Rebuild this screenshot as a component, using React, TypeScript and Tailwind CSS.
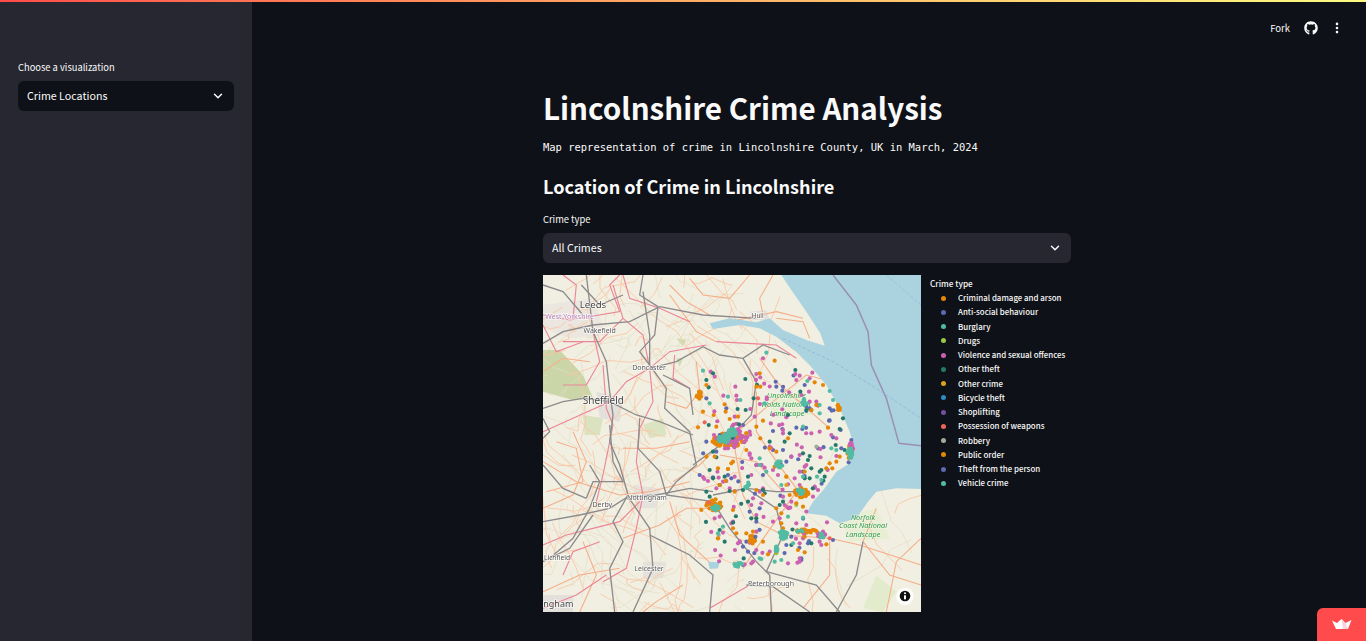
import { ChevronDown, EllipsisVertical } from "lucide-react";
import { FaGithub } from "react-icons/fa";

const SANS = "font-['Noto_Sans_CJK_SC','Noto_Sans',sans-serif]";

const LEGEND: [string, string][] = [
  ["Criminal damage and arson", "#e58606"],
  ["Anti-social behaviour", "#5d69b1"],
  ["Burglary", "#52bca3"],
  ["Drugs", "#99c945"],
  ["Violence and sexual offences", "#cc61b0"],
  ["Other theft", "#24796c"],
  ["Other crime", "#daa51b"],
  ["Bicycle theft", "#2f8ac4"],
  ["Shoplifting", "#764e9f"],
  ["Possession of weapons", "#ed645a"],
  ["Robbery", "#a5aa99"],
  ["Public order", "#e58606"],
  ["Theft from the person", "#5d69b1"],
  ["Vehicle crime", "#52bca3"],
];

const GREY = [
  "0,205 60,170 150,150 260,140 350,95 480,120 640,130",
  "130,0 150,170 190,260 200,350 210,420 200,500 230,570 255,660 210,740 240,800 200,880 215,1011",
  "300,50 320,180 320,270 370,340 365,400 440,470 460,570 400,620 370,660 510,680 560,760 640,860 680,900 685,1011",
  "320,280 400,260 480,215 530,240 600,250 660,210 740,240",
  "0,740 110,720 200,700 255,665 340,660 440,640 510,650",
  "270,1011 330,880 320,760 255,665",
  "0,860 80,820 150,720",
  "600,250 640,320 625,420 560,490 450,570",
  "510,660 610,640 700,650 760,650",
  "610,640 700,700 720,780 670,890 820,930 890,1011",
  "0,400 60,380 120,370 200,380 280,420 350,440 450,480",
  "200,450 210,560 240,620 150,620 130,670",
  "360,300 400,320 440,340 450,420",
  "500,1011 510,900 440,840 360,800 320,780",
  "960,800 940,900 880,1011",
  "0,570 60,640 130,670",
  "345,95 335,180 290,230 320,270",
  "0,30 60,50 120,120",
  "290,430 285,520 350,590 370,660",
  "140,570 170,620 140,700 90,790 20,850",
  "0,430 20,470 0,490",
  "800,1011 690,935 610,930",
  "300,0 290,60 345,95",
  "115,30 170,90 240,60",
];
const PINK = [
  "0,120 80,135 230,110 200,30 230,0",
  "150,170 170,260 130,330 60,330",
  "320,280 300,180 240,130",
  "0,470 90,430 200,380 250,320 320,280 380,230 490,210",
  "180,270 190,400 210,450 180,600 160,680",
  "320,280 330,380 290,460 280,560 300,660 280,760 250,880 180,920",
  "0,810 70,780 150,760 230,740 290,680",
  "520,200 700,210 760,250",
  "350,100 440,140",
  "500,1000 620,930",
  "210,30 240,130 170,200 60,200",
  "90,130 100,30 60,0",
  "0,1000 100,960 190,900",
  "395,240 390,310 440,340",
  "0,150 40,230 120,200",
  "60,900 90,830 170,800",
  "240,0 260,70 350,100",
];
const ORANGE = [
  "0,560 100,620 230,660 320,650 440,620",
  "570,490 600,660 640,740 720,780",
  "520,520 470,570 390,620",
  "560,490 690,380 790,300 870,320",
  "640,350 640,470 700,560 760,640",
  "760,650 640,820 600,880",
  "720,780 860,790 950,810 1134,870",
  "560,140 700,110 780,130",
  "690,0 650,70 660,120",
  "380,30 430,80 500,120",
  "0,950 110,900 230,880",
  "10,650 120,620 100,520 40,500",
  "1000,700 960,800 1040,900 1134,930",
  "860,800 860,900 780,1000",
  "520,880 410,780 380,680",
  "370,380 430,400 470,350 460,260",
  "0,290 60,250 140,260",
  "420,930 340,980 300,1011",
  "120,800 160,900 110,1011",
  "0,700 90,660 130,560 90,470",
  "240,520 340,520 440,500",
  "240,790 350,750 430,700 500,700",
  "1030,1011 1060,860 1134,790",
  "530,540 640,560 720,650",
  "650,250 700,320 780,390 860,460",
  "440,10 480,60 560,70 620,0",
  "380,60 460,170 520,200",
  "700,130 780,140 800,190",
];

function rng(seed: number) {
  let s = seed;
  return () => {
    s = (s * 1664525 + 1013904223) % 4294967296;
    return s / 4294967296;
  };
}
const MINOR = (() => {
  const r = rng(77);
  const out: string[] = [];
  for (let i = 0; i < 210; i++) {
    let x = r() * 1134;
    let y = r() * 1011;
    if (x > 480 && r() < 0.55) x = r() * 480;
    if (x > 720 && y < 640) x = r() * 640;
    const pts = [`${x.toFixed(0)},${y.toFixed(0)}`];
    const dx = (r() - 0.5) * 110;
    const dy = (r() - 0.5) * 110;
    for (let j = 0; j < 4; j++) {
      x += dx + (r() - 0.5) * 45;
      y += dy + (r() - 0.5) * 45;
      pts.push(`${x.toFixed(0)},${y.toFixed(0)}`);
    }
    out.push(pts.join(" "));
  }
  return out;
})();

const parse = (s: string) =>
  s
    .trim()
    .split(/\s+/)
    .map((p) => p.split(",").map(Number) as [number, number]);

function cluster(seed: number, x: number, y: number, rx: number, ry: number, n: number) {
  const r = rng(seed);
  const out: [number, number][] = [];
  for (let i = 0; i < n; i++) {
    const a = r() * Math.PI * 2;
    const d = Math.sqrt(r());
    out.push([x + Math.cos(a) * rx * d, y + Math.sin(a) * ry * d]);
  }
  return out;
}

function scatter(seed: number, n: number) {
  const r = rng(seed);
  const out: [number, number][] = [];
  while (out.length < n) {
    const x = 470 + r() * 450;
    const y = 300 + r() * 570;
    const east =
      y < 400 ? 790 + (y - 300) * 0.9 : y < 520 ? 880 + (y - 400) * 0.35 : y < 640 ? 920 - (y - 520) * 0.7 : 840;
    const west = y < 400 ? 600 : 480;
    if (x < east - 8 && x > west) out.push([x, y]);
  }
  return out;
}

const OR_CLUSTER = [
  ...cluster(3, 555, 495, 50, 22, 60),
  ...cluster(4, 515, 690, 26, 18, 34),
  ...cluster(5, 775, 652, 24, 16, 30),
  ...cluster(6, 790, 768, 30, 5, 16),
  ...cluster(7, 628, 792, 8, 14, 12),
  ...cluster(8, 920, 530, 10, 20, 14),
  ...cluster(9, 468, 360, 8, 12, 12),
  ...cluster(10, 888, 398, 8, 10, 6),
];
const OR_PTS = parse(
  "695,257 650,295 640,335 652,335 545,388 548,410 512,420 480,410 520,455 465,457 490,545 515,545 610,475 585,425 560,432 610,525 640,455 660,437 652,490 735,490 680,520 700,530 695,575 730,605 785,590 570,560 565,565 555,582 525,580 530,630 548,618 575,650 640,645 660,660 700,700 715,715 740,660 760,685 780,695 820,390 805,405 825,390 885,390 890,405 855,458 860,565 850,580 868,580 880,560 890,545 840,330 815,322 660,800 610,775 570,705 630,770 625,790 630,800 580,775 525,790 570,760 620,800 720,760 715,745 700,830 675,838 765,825 785,832 785,785 820,768 790,767 765,770 850,808 475,705 470,350 462,362 490,330"
);
const IN_PTS = [
  ...parse(
    "470,600 510,607 555,600 565,610 590,800 600,815 615,830 610,800 700,335 718,347 690,468 718,462 760,458 778,462 690,525 720,525 745,545 785,330 790,395 790,408 860,400 858,437 893,465 870,487 825,520 917,562 895,520 780,590 785,603 730,560 660,600 655,570 640,570 620,710 640,740 650,700 490,370 530,480 550,400 490,500 520,530 870,795 795,805 745,785 730,810 775,855 775,850 600,870 800,400 925,495 575,500 600,450"
  ),
  ...scatter(41, 25),
];
const MG_PTS = [
  ...parse(
    "503,290 515,305 660,250 640,297 577,335 541,362 580,362 582,375 622,402 635,425 575,425 620,470 590,470 600,485 520,490 513,480 620,540 625,550 565,500 555,520 640,570 665,578 705,600 660,640 650,650 655,685 630,670 540,620 520,640 484,612 495,618 575,605 625,600 570,740 565,745 590,800 585,805 625,690 640,720 770,302 760,315 757,297 808,293 800,310 798,350 775,360 820,380 825,392 800,380 805,475 830,470 790,570 785,575 770,590 755,610 735,628 770,630 815,635 825,645 810,665 720,665 745,680 725,690 690,740 710,730 760,745 790,750 852,742 780,790 770,805 830,800 835,810 840,770 770,850 770,860 735,865 640,825 630,860 625,865 605,868 680,830 880,543 880,490 865,480 745,545 770,540 720,465 720,475 655,570 690,585 685,520 680,515 620,535 530,725 515,730 560,640 550,618 575,648 640,770 925,505 930,520"
  ),
  ...cluster(11, 580, 480, 40, 35, 34),
  ...cluster(12, 925, 510, 6, 18, 8),
  ...cluster(13, 830, 780, 22, 8, 10),
  ...scatter(42, 50),
];
const DG_PTS = [
  ...parse(
    "510,295 497,337 490,315 607,312 632,370 735,420 757,285 772,350 790,405 805,405 680,500 740,475 725,500 780,535 795,555 800,543 835,585 845,605 830,590 878,510 905,525 900,430 890,462 510,530 520,547 530,630 500,585 510,610 545,605 490,650 500,665 560,648 600,645 660,645 665,655 615,680 625,730 640,730 530,765 545,800 615,605 720,680 710,690 800,610 805,580 785,610 805,805 745,810"
  ),
  ...scatter(43, 14),
];
const TL_PTS = [
  ...parse(
    "480,287 500,385 555,365 592,375 670,233 793,318 860,348 830,390 830,415 870,375 780,455 865,520 650,550 650,570 670,590 780,605 822,605 835,615 715,630 735,725 780,728 880,525 665,385 750,805 525,775 700,815 695,860 650,850 715,855 540,755 655,852 700,820"
  ),
  ...cluster(21, 542, 492, 17, 12, 24),
  ...cluster(22, 568, 472, 12, 11, 16),
  ...cluster(33, 556, 482, 12, 10, 10),
  ...cluster(23, 708, 568, 13, 10, 12),
  ...cluster(24, 785, 382, 9, 10, 8),
  ...cluster(25, 920, 535, 8, 18, 16),
  ...cluster(26, 772, 650, 11, 9, 10),
  ...cluster(27, 612, 630, 8, 10, 9),
  ...cluster(28, 518, 698, 11, 9, 10),
  ...cluster(29, 722, 778, 14, 14, 18),
  ...cluster(30, 585, 868, 15, 7, 14),
  ...cluster(31, 765, 768, 15, 3, 6),
  ...cluster(32, 835, 782, 9, 7, 6),
  ...cluster(34, 698, 822, 6, 10, 5),
];

const DOTS: [string, [number, number][]][] = [
  ["#e58606", OR_CLUSTER],
  ["#5d69b1", IN_PTS],
  ["#99c945", parse("720,790 570,450 760,690 700,835")],
  ["#cc61b0", MG_PTS],
  ["#24796c", DG_PTS],
  ["#daa51b", parse("730,605 610,475 555,582 730,630 525,790")],
  ["#ed645a", parse("485,442 645,370 860,790 498,682")],
  ["#a5aa99", parse("820,515 527,780")],
  ["#e58606", OR_PTS],
  ["#52bca3", TL_PTS],
];

function MapPicture() {
  return (
    <svg viewBox="0 0 1134 1011" className="h-[337px] w-[378px] shrink-0 bg-[#f1efe1]">
      <g className="blur-[0.6px]">
        <path d="M0 225 L50 225 L120 300 L150 370 L90 375 L0 350Z" fill="#cbd6a8" />
        <path d="M300 450 L360 430 L370 480 L320 490Z" fill="#dbe4c2" />
        <path d="M120 420 L180 430 L170 480 L125 480Z" fill="#dbe2bf" />
        <path d="M400 250 L420 250 L410 275Z" fill="#cfdcb0" />
        <path d="M400 190 L430 195 L420 215Z" fill="#cfdcb0" />
        <path d="M1000 900 L1060 950 L1020 1011 L960 1000Z" fill="#e2ebcc" />
        <path d="M660 360 L780 350 L810 420 L700 430Z" fill="#e7eed2" />
        <path d="M890 730 L1000 700 L1040 790 L920 800Z" fill="#e7eed2" />
        <path d="M0 90 L150 70 L190 180 L80 190 L0 160Z" fill="#ebe6df" />
        <path d="M160 350 L240 370 L230 440 L170 430Z" fill="#e3e0dc" />
        <path d="M270 630 L350 640 L340 700 L280 700Z" fill="#e5e1dc" />
        <path d="M300 860 L370 860 L360 910 L300 910Z" fill="#e5e1dc" />
        <path d="M0 960 L90 960 L90 1011 L0 1011Z" fill="#e3e0dc" />
        <path d="M620 110 L670 105 L680 135 L630 135Z" fill="#e3e0dc" />
        {MINOR.map((p, i) => (
          <polyline key={i} points={p} fill="none" stroke={i % 2 === 0 ? "#f9c6a6" : "#e4dcc4"} strokeWidth={i % 2 === 0 ? 2.6 : 2} />
        ))}
        {ORANGE.map((p, i) => (
          <polyline key={i} points={p} fill="none" stroke="#f6ad88" strokeWidth="3.2" />
        ))}
        <path d="M715 0 L745 45 L790 110 L832 175 L845 212 L790 195 L720 165 L680 130 L640 142 L560 130 L500 145 L510 162 L590 150 L650 160 L700 185 L760 230 L800 270 L850 330 L890 400 L920 470 L935 520 L920 565 L880 590 L845 640 L810 680 L790 715 L850 722 L890 745 L940 730 L975 680 L1000 650 L1060 640 L1134 642 L1134 0Z" fill="#aad3df" />
        <path d="M495 860 L530 862 L525 880 L500 882Z" fill="#aad3df" />
        {PINK.map((p, i) => (
          <polyline key={i} points={p} fill="none" stroke="#ec8597" strokeWidth="3.4" />
        ))}
        {GREY.map((p, i) => (
          <polyline key={i} points={p} fill="none" stroke="#8c8a8c" strokeWidth="4" />
        ))}
        <polyline points="870,0 940,90 975,170 985,270 1030,370 1068,505 1134,512" fill="none" stroke="#9c8fb4" strokeWidth="4.5" />
        <polyline points="1030,0 1134,90" fill="none" stroke="#8fb3d8" strokeWidth="2" strokeDasharray="10 6" />
        <polyline points="720,190 870,260 1000,340 1134,430" fill="none" stroke="#8fb3d8" strokeWidth="2.4" strokeDasharray="10 6" />
        <g className="font-['Noto_Sans',sans-serif]" textAnchor="middle" stroke="#ffffff" strokeOpacity="0.8" strokeWidth="4" paintOrder="stroke">
          <text x="150" y="98" fontSize="29" fill="#444444">Leeds</text>
          <text x="80" y="132" fontSize="21" fill="#b080b4">West Yorkshire</text>
          <text x="170" y="174" fontSize="21" fill="#555555">Wakefield</text>
          <text x="644" y="130" fontSize="19" fill="#555555">Hull</text>
          <text x="318" y="284" fontSize="21" fill="#555555">Doncaster</text>
          <text x="181" y="386" fontSize="30" fill="#444444">Sheffield</text>
          <text x="178" y="696" fontSize="21" fill="#555555">Derby</text>
          <text x="312" y="674" fontSize="21" fill="#555555">Nottingham</text>
          <text x="318" y="888" fontSize="21" fill="#555555">Leicester</text>
          <text x="684" y="932" fontSize="21" fill="#555555">Peterborough</text>
          <text x="42" y="855" fontSize="20" fill="#555555">Lichfield</text>
          <text x="46" y="996" fontSize="27" fill="#444444">ngham</text>
          <g fontStyle="italic" strokeOpacity="0.4">
            <text x="730" y="370" fontSize="22" fill="#2f9a48">Lincolnshire</text>
            <text x="728" y="396" fontSize="22" fill="#2f9a48">Wolds National</text>
            <text x="732" y="424" fontSize="22" fill="#2f9a48">Landscape</text>
            <text x="960" y="734" fontSize="22" fill="#2f9a48">Norfolk</text>
            <text x="960" y="760" fontSize="22" fill="#2f9a48">Coast National</text>
            <text x="960" y="787" fontSize="22" fill="#2f9a48">Landscape</text>
          </g>
        </g>
      </g>
      {DOTS.map(([color, pts], k) =>
        pts.map(([x, y], i) => <circle key={`${k}-${i}`} cx={x} cy={y} r="6.2" fill={color} />)
      )}
      <circle cx="1086" cy="964" r="26" fill="#ffffff" fillOpacity="0.85" />
      <circle cx="1086" cy="963" r="16" fill="#111111" />
      <circle cx="1086" cy="955" r="3" fill="#ffffff" />
      <rect x="1083" y="961" width="6" height="12" fill="#ffffff" />
    </svg>
  );
}

function Select({ label, className }: { label: string; className: string }) {
  return (
    <div className={`flex h-[30px] items-center justify-between rounded-md px-[9px] text-[10.7px] leading-[30px] text-[#fafafa] ${className}`}>
      <span>{label}</span>
      <ChevronDown size={14} strokeWidth={2.5} />
    </div>
  );
}

export default function App() {
  return (
    <div className={`relative flex h-[641px] w-full overflow-hidden bg-[#0e1117] text-[#fafafa] ${SANS}`}>
      <div className="absolute inset-x-0 top-0 z-10 h-[2px] bg-gradient-to-r from-[#ff4b4b] to-[#fffd80]" />

      <aside className="flex w-[252px] shrink-0 flex-col bg-[#262730] px-[18px] pt-[61px]">
        <label className="mb-[7px] h-[13px] text-[9.35px] leading-[13px]">Choose a visualization</label>
        <Select label="Crime Locations" className="bg-[#0e1117]" />
      </aside>

      <main className="flex min-w-0 flex-1 flex-col">
        <header className="flex h-[56px] shrink-0 items-center justify-end pr-[22px]">
          <span className="mr-[14px] text-[9.5px]">Fork</span>
          <FaGithub size={14} className="mr-[12px]" />
          <EllipsisVertical size={14} strokeWidth={2.5} />
        </header>

        <div className="ml-[291px] flex w-[528px] flex-col">
          <h1 className="mt-[31px] h-[42px] whitespace-nowrap text-[29.6px] font-bold leading-[42px]">Lincolnshire Crime Analysis</h1>
          <p className="mt-[10px] h-[16px] whitespace-pre font-['DejaVu_Sans_Mono',monospace] text-[10.48px] leading-[16px]">
            Map representation of crime in Lincolnshire County, UK in March, 2024
          </p>
          <h2 className="mt-[17px] h-[28px] whitespace-nowrap text-[18.1px] font-semibold leading-[28px]">Location of Crime in Lincolnshire</h2>
          <label className="mt-[13px] h-[13px] text-[9.35px] leading-[13px]">Crime type</label>
          <Select label="All Crimes" className="mt-[7px] bg-[#262730]" />
          <div className="mt-[12px] flex">
            <MapPicture />
            <div className="flex flex-col pl-[9px] pt-[2px]">
              <div className="mb-[1px] h-[13px] text-[8.2px] font-medium leading-[13px]">Crime type</div>
              {LEGEND.map(([name, color]) => (
                <div key={name} className="flex h-[14.25px] items-center whitespace-nowrap text-[7.9px] font-medium leading-[14px]">
                  <span className="ml-[11px] mr-[12px] h-[5px] w-[5px] rounded-full" style={{ backgroundColor: color }} />
                  {name}
                </div>
              ))}
            </div>
          </div>
        </div>
      </main>

      <div className="absolute bottom-0 right-0 flex h-[33px] w-[49px] items-center justify-center rounded-tl-md bg-[#ff4b4b]">
        <svg width="20" height="11" viewBox="0 0 20 11">
          <path d="M0 1.5 L5 4 L9.5 0 L13.5 4 L19.5 1 L16 10 L4 10Z" fill="#ffffff" />
          <path d="M9.5 0 L13.5 4 L16 10 L11 10Z" fill="#f9d3df" />
        </svg>
      </div>
    </div>
  );
}
